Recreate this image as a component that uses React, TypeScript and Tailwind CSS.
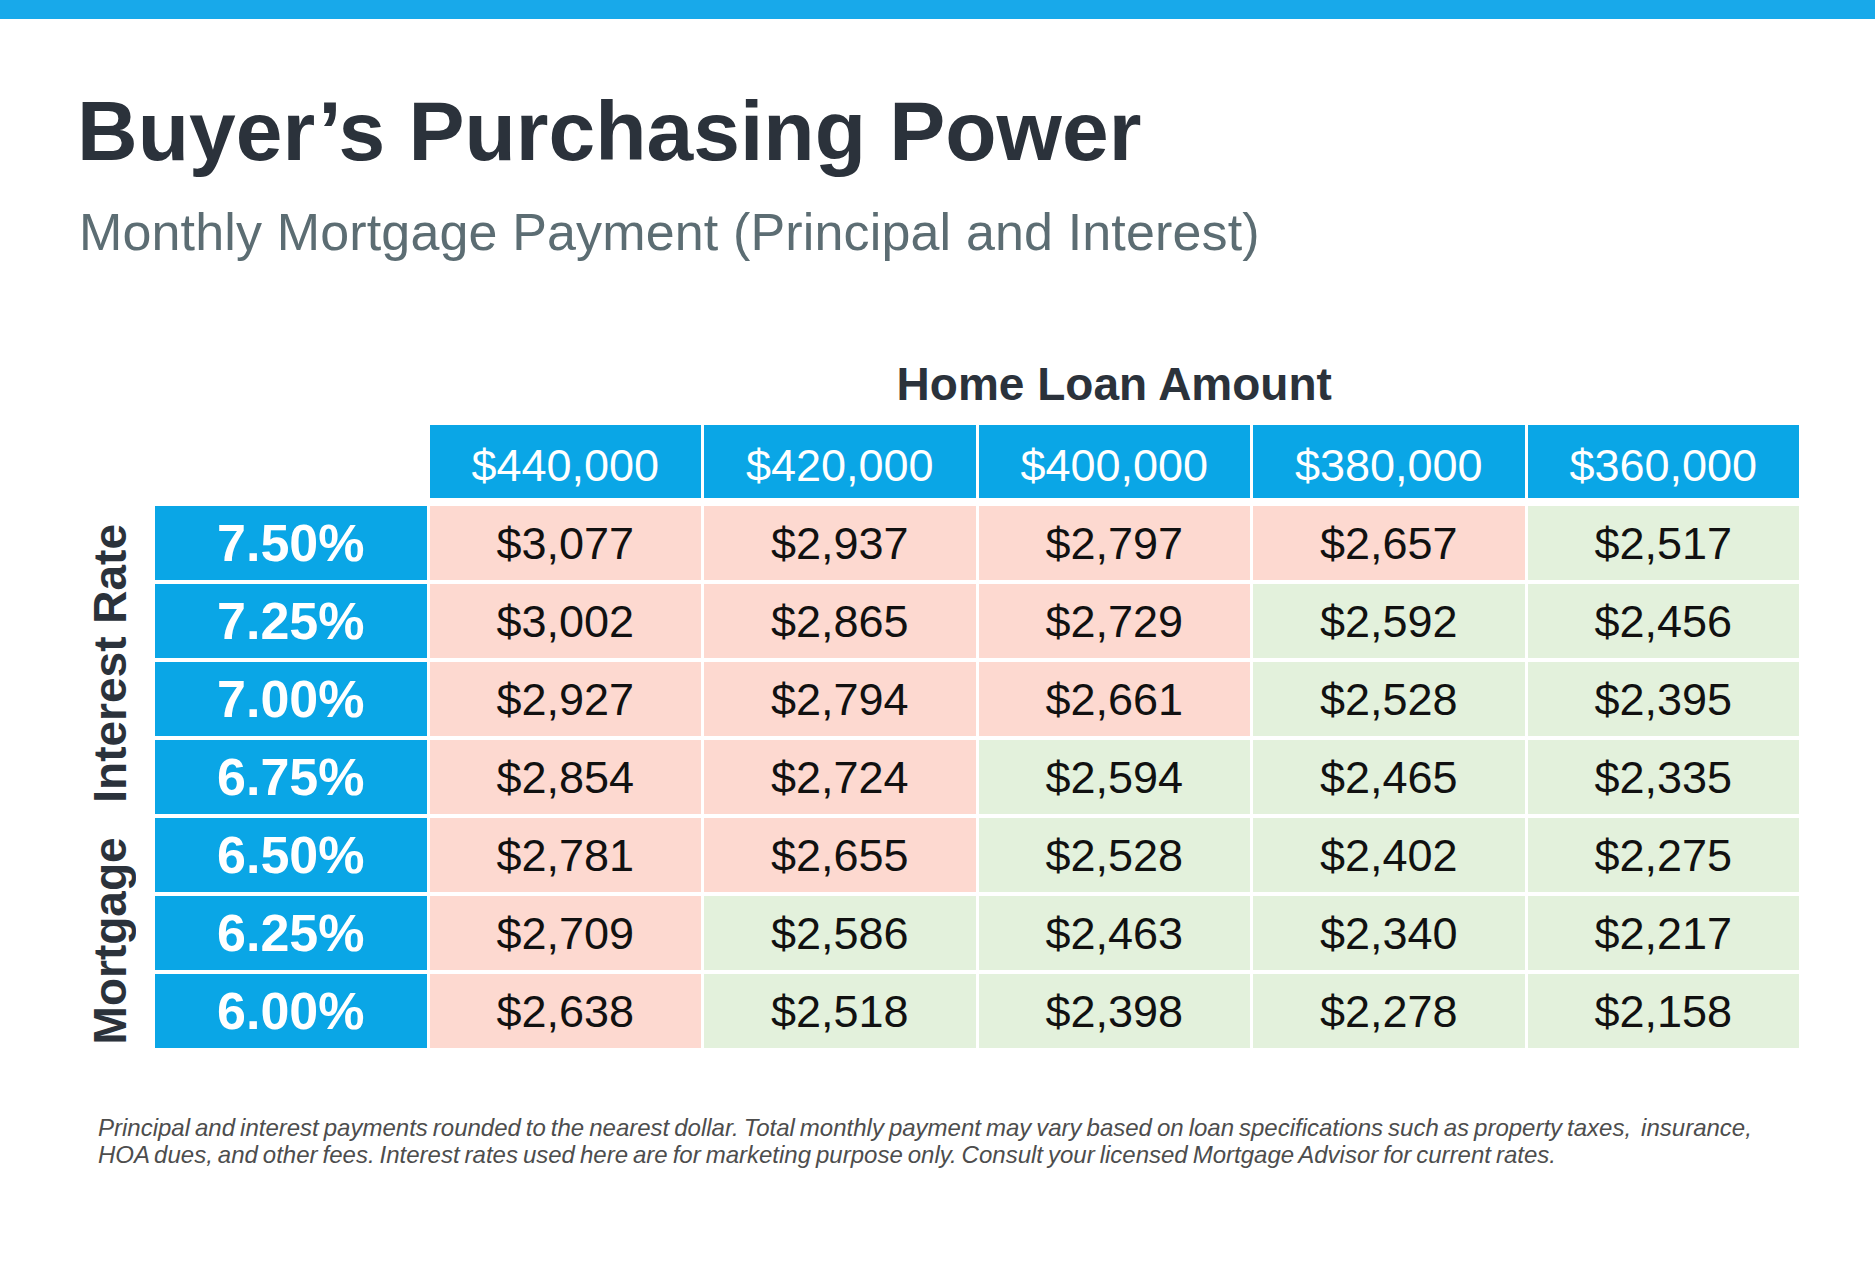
const amounts = ["$440,000", "$420,000", "$400,000", "$380,000", "$360,000"];

const rows = [
  { rate: "7.50%", values: ["$3,077", "$2,937", "$2,797", "$2,657", "$2,517"] },
  { rate: "7.25%", values: ["$3,002", "$2,865", "$2,729", "$2,592", "$2,456"] },
  { rate: "7.00%", values: ["$2,927", "$2,794", "$2,661", "$2,528", "$2,395"] },
  { rate: "6.75%", values: ["$2,854", "$2,724", "$2,594", "$2,465", "$2,335"] },
  { rate: "6.50%", values: ["$2,781", "$2,655", "$2,528", "$2,402", "$2,275"] },
  { rate: "6.25%", values: ["$2,709", "$2,586", "$2,463", "$2,340", "$2,217"] },
  { rate: "6.00%", values: ["$2,638", "$2,518", "$2,398", "$2,278", "$2,158"] },
];

// payments above this are shaded red, the rest green
const THRESHOLD = 2600;

function toNumber(v: string) {
  return Number(v.replace(/[$,]/g, ""));
}

export default function App() {
  return (
    <div className="w-[1875px] h-[1275px] bg-white font-['Liberation_Sans',Arial,sans-serif] overflow-hidden">
      <div className="h-[19px] bg-[#18a9ea]" />

      {/* Heading */}
      <div className="pl-[77px]">
        <h1 className="mt-[70px] text-[84px] leading-none font-bold text-[#2b323b]">
          Buyer’s Purchasing Power
        </h1>
        <p className="mt-[33px] pl-[2px] text-[52px] leading-none tracking-[0.15px] text-[#5c6d73]">
          Monthly Mortgage Payment (Principal and Interest)
        </p>
      </div>

      {/* Table */}
      <div className="mt-[103px] pl-[155px]">
        <div className="grid grid-cols-[repeat(6,271.5px)] gap-x-[3px]">
          <div />
          <div className="col-span-5 text-center text-[46px] leading-none font-bold text-[#2b323b]">
            Home Loan Amount
          </div>
        </div>

        <div className="mt-[18px] grid grid-cols-[repeat(6,271.5px)] gap-x-[3px]">
          <div />
          {amounts.map((a) => (
            <div
              key={a}
              className="h-[73px] pt-[8px] flex items-center justify-center bg-[#0aa6e6] text-white text-[45px] leading-none"
            >
              {a}
            </div>
          ))}
        </div>
      </div>

      <div className="mt-[8px] flex">
        <div className="w-[155px] flex items-center">
          <span className="ml-[87px] mt-[14px] [writing-mode:vertical-rl] rotate-180 whitespace-nowrap text-[46px] leading-none font-bold text-[#2b323b]">
            Mortgage<span className="inline-block h-[22px]" /> Interest Rate
          </span>
        </div>
        <div className="grid grid-cols-[repeat(6,271.5px)] gap-x-[3px] gap-y-[4px]">
          {rows.map((r) => (
            <div key={r.rate} className="contents">
              <div className="h-[74px] flex items-center justify-center bg-[#0aa6e6] text-white text-[52px] leading-none font-bold">
                {r.rate}
              </div>
              {r.values.map((v) => (
                <div
                  key={v}
                  className={
                    toNumber(v) > THRESHOLD
                      ? "h-[74px] flex items-center justify-center bg-[#fdd9d0] text-[#111] text-[45px] leading-none"
                      : "h-[74px] flex items-center justify-center bg-[#e3f1dc] text-[#111] text-[45px] leading-none"
                  }
                >
                  {v}
                </div>
              ))}
            </div>
          ))}
        </div>
      </div>

      {/* Disclaimer */}
      <p className="mt-[66px] pl-[98px] text-[24px] leading-[27px] italic text-[#4d4d4d] [word-spacing:-0.07em]">
        Principal and interest payments rounded to the nearest dollar. Total monthly payment may vary based on loan
        specifications such as property taxes,&nbsp; insurance,
        <br />
        HOA dues, and other fees. Interest rates used here are for marketing purpose only. Consult your licensed
        Mortgage Advisor for current rates.
      </p>
    </div>
  );
}
